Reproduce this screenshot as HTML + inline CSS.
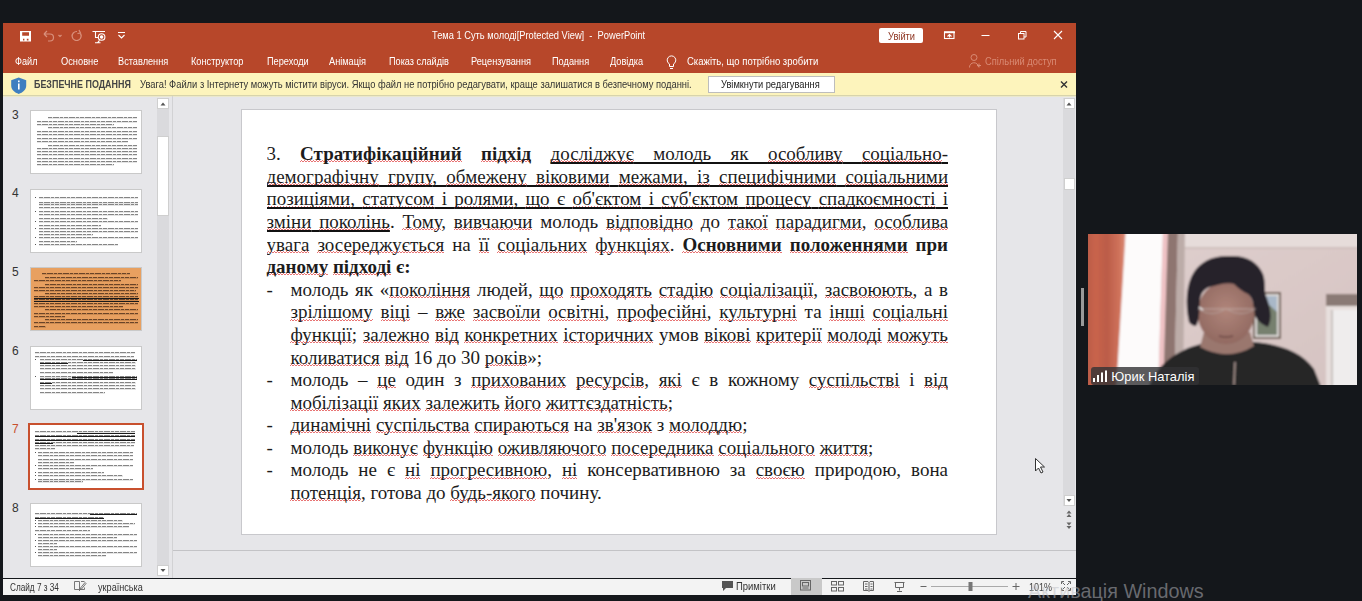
<!DOCTYPE html>
<html><head><meta charset="utf-8">
<style>
*{margin:0;padding:0;box-sizing:border-box}
html,body{width:1362px;height:601px;overflow:hidden;background:#14171b;font-family:"Liberation Sans",sans-serif;position:relative}
div{position:absolute}
.t{white-space:pre;transform-origin:0 0;line-height:1}
#title{left:3px;top:23px;width:1073px;height:50px;background:#b7472a}
#msg{left:3px;top:73px;width:1073px;height:24px;background:#fdf4bc;border-bottom:1px solid #ebe8cc}
#main{left:3px;top:97px;width:1073px;height:481px;background:#e6e6e9}
#status{left:3px;top:579px;width:1073px;height:16px;background:#f3f3f3}
.wt{color:#fff;font-size:10px}
.ln{white-space:nowrap;font-family:"Liberation Serif",serif;font-size:19px;color:#1c1c1c;line-height:22.58px;height:22.58px}
.j{text-align:justify;text-align-last:justify;white-space:normal;overflow:hidden}
.w{background-image:linear-gradient(90deg,transparent 0 1px,rgba(225,70,70,.75) 1px 2px,transparent 2px),linear-gradient(90deg,rgba(225,70,70,.75) 0 1px,transparent 1px 2px,rgba(225,70,70,.75) 2px);background-size:3px 1px,3px 1px;background-position:0 17.2px,0 18.2px;background-repeat:repeat-x}
u{text-decoration:underline #111;text-decoration-thickness:1.5px;text-underline-offset:1.5px;text-decoration-skip-ink:none}
.thumb{background:#fff;border:1px solid #c9c9c9;width:112px;height:64px;overflow:hidden}
.tl{left:8px;width:96px;height:1px;background:#777}
.num{font-size:12px;color:#333}
</style></head>
<body>
<!-- title bar -->
<div id="title"></div>
<!-- QAT icons -->
<svg style="position:absolute;left:0;top:0;z-index:5" width="1362" height="100">
  <!-- save -->
  <path fill="#fff" fill-rule="evenodd" d="M20 31h11v10.5h-11z M22.2 32.3h6.8v3.4h-6.8z M23 38.7h1.4v1.8h-1.4z M26.8 38.7h1.7v1.8h-1.7z"/>
  <!-- undo (disabled) -->
  <g fill="none" stroke="#d9907c" stroke-width="1.2">
    <path d="M44 34 l3-3 M44 34 l3 3 M44 34 h6 a3.5 3.5 0 0 1 0 7 h-2"/>
    <path d="M58.5 35 l1.5 1.5 l1.5-1.5"/>
    <path d="M80 33 a4.5 4.5 0 1 1 -3 -1.5 M79 30 l1.5 3 l-3 0.5"/>
  </g>
  <!-- present from start -->
  <g fill="none" stroke="#fff" stroke-width="1.1">
    <path d="M92.5 31.5h12.5 M95.5 31.5v6h2.5"/>
    <circle cx="101.6" cy="37" r="3.3"/>
    <circle cx="101.6" cy="37" r="1.2" fill="#fff"/>
    <path d="M95 42.8h5.5 M97.5 42.8l2-2.5"/>
  </g>
  <!-- dropdown -->
  <g fill="none" stroke="#fff" stroke-width="1.1">
    <path d="M118 32.5h7 M118.5 35l3 3l3-3"/>
  </g>
  <!-- ribbon display options -->
  <g fill="none" stroke="#fff" stroke-width="1.1">
    <rect x="944.5" y="32" width="9.5" height="6.5"/>
    <path d="M944 32.3h11" stroke-width="1.8"/>
    <path d="M947.5 36.5l2-2l2 2 M949.5 34.5v3" />
  </g>
  <!-- minimize -->
  <path d="M981.5 35.5h8" stroke="#fff" stroke-width="1"/>
  <!-- restore -->
  <g fill="none" stroke="#fff" stroke-width="1">
    <rect x="1018.5" y="33.5" width="5.5" height="5.5"/>
    <path d="M1020.5 33.5v-2h5.5v5.5h-2"/>
  </g>
  <!-- close -->
  <path d="M1054 31l8 8 M1062 31l-8 8" stroke="#fff" stroke-width="1.1"/>
  <!-- lightbulb -->
  <g fill="none" stroke="#fff" stroke-width="1">
    <path d="M669.5 66.5v-2.5 a4.3 4.3 0 1 1 4 0 v2.5z"/>
    <path d="M670 68.5h3"/>
  </g>
  <!-- person share -->
  <g fill="none" stroke="#d98a74" stroke-width="1">
    <circle cx="974" cy="57.5" r="3"/>
    <path d="M969.5 67.5a4.5 4.5 0 0 1 9-0.5 M977 65.5h4 M979 63.5v4"/>
  </g>
  <!-- shield -->
  <path d="M18.7 77.5 l7.5 2.8 v5.5 c0 4-3.5 6.8-7.5 8.2 c-4-1.4-7.5-4.2-7.5-8.2 v-5.5z" fill="#3f7fc0"/>
  <rect x="18" y="83.5" width="1.6" height="6" fill="#fff"/>
  <rect x="18" y="80.5" width="1.6" height="1.7" fill="#fff"/>
  <!-- msg close -->
  <path d="M1061 81.5l6 6 M1067 81.5l-6 6" stroke="#333" stroke-width="1.4"/>
</svg>
<div class="t wt" style="left:432px;top:31px;transform:scaleX(0.93)">Тема 1 Суть молоді[Protected View]  -  PowerPoint</div>
<div style="left:879px;top:28px;width:44px;height:15px;background:#fff;border-radius:2px"></div>
<div class="t" style="left:888px;top:31.5px;font-size:10px;color:#8e3522;transform:scaleX(0.93)">Увійти</div>

<div class="t wt" style="left:15px;top:57px;transform:scaleX(0.915)">Файл</div>
<div class="t wt" style="left:60.6px;top:57px;transform:scaleX(0.929)">Основне</div>
<div class="t wt" style="left:118px;top:57px;transform:scaleX(0.92)">Вставлення</div>
<div class="t wt" style="left:190.5px;top:57px;transform:scaleX(0.92)">Конструктор</div>
<div class="t wt" style="left:266.8px;top:57px;transform:scaleX(0.92)">Переходи</div>
<div class="t wt" style="left:329.2px;top:57px;transform:scaleX(0.92)">Анімація</div>
<div class="t wt" style="left:388.9px;top:57px;transform:scaleX(0.914)">Показ слайдів</div>
<div class="t wt" style="left:470.5px;top:57px;transform:scaleX(0.92)">Рецензування</div>
<div class="t wt" style="left:551.5px;top:57px;transform:scaleX(0.92)">Подання</div>
<div class="t wt" style="left:610.3px;top:57px;transform:scaleX(0.92)">Довідка</div>
<div class="t wt" style="left:686.9px;top:57px;transform:scaleX(0.951)">Скажіть, що потрібно зробити</div>
<div class="t wt" style="left:985.3px;top:57px;color:#d98a74;transform:scaleX(0.932)">Спільний доступ</div>

<!-- message bar -->
<div id="msg"></div>
<div class="t" style="left:34.4px;top:80px;font-size:10px;font-weight:bold;color:#444;transform:scaleX(0.893)">БЕЗПЕЧНЕ ПОДАННЯ</div>
<div class="t" style="left:139.5px;top:80px;font-size:10px;color:#333;transform:scaleX(0.935)">Увага! Файли з Інтернету можуть містити віруси. Якщо файл не потрібно редагувати, краще залишатися в безпечному поданні.</div>
<div style="left:708px;top:76px;width:127px;height:17px;background:#fff;border:1px solid #bdbdbd"></div>
<div class="t" style="left:721px;top:80px;font-size:10px;color:#222;transform:scaleX(0.93)">Увімкнути редагування</div>

<!-- main -->
<div id="main"></div>
<div style="left:3px;top:95px;width:1073px;height:1px;background:#d8d4ac"></div>
<!-- left panel scrollbar -->
<div style="left:157px;top:98px;width:12px;height:478px;background:#dadadd"></div>
<div style="left:157px;top:98px;width:12px;height:11px;background:#fff;border:1px solid #cfcfcf"></div>
<div style="left:157px;top:136px;width:12px;height:80px;background:#fff;border:1px solid #cfcfcf"></div>
<div style="left:157px;top:565px;width:12px;height:11px;background:#fff;border:1px solid #cfcfcf"></div>
<div style="left:172px;top:96px;width:1px;height:482px;background:#d2d2d4"></div>
<!-- right scrollbar -->
<div style="left:1063px;top:98px;width:12px;height:408px;background:#dadadd"></div>
<div style="left:1063.5px;top:98px;width:11px;height:11px;background:#fff;border:1px solid #cfcfcf"></div>
<div style="left:1063.5px;top:178px;width:11px;height:12px;background:#fff;border:1px solid #cfcfcf"></div>
<div style="left:1063.5px;top:495px;width:11px;height:11px;background:#fff;border:1px solid #cfcfcf"></div>
<!-- bottom notes separator -->
<div style="left:173px;top:550px;width:903px;height:1px;background:#c3c3c6"></div>

<svg style="position:absolute;left:0;top:0" width="1362" height="601">
  <path d="M160.5 105.5l2.5-3l2.5 3z" fill="#555"/>
  <path d="M160.5 569l2.5 3l2.5-3z" fill="#555"/>
  <path d="M1066.5 105.5l2.5-3l2.5 3z" fill="#555"/>
  <path d="M1066.5 499l2.5 3l2.5-3z" fill="#555"/>
  <path d="M1066.5 513.5l2.5-3l2.5 3z M1066.5 517l2.5-3l2.5 3z" fill="#666"/>
  <path d="M1066.5 522.5l2.5 3l2.5-3z M1066.5 526l2.5 3l2.5-3z" fill="#666"/>
</svg>

<!-- thumbnails -->
<div class="t num" style="left:12px;top:108.5px">3</div>
<div class="thumb" style="left:30px;top:110px"></div>
<div class="t num" style="left:12px;top:186.5px">4</div>
<div class="thumb" style="left:30px;top:189px"></div>
<div class="t num" style="left:12px;top:265.5px">5</div>
<div class="thumb" style="left:30px;top:267px;background:#e8a060"></div>
<div class="t num" style="left:12px;top:344.5px">6</div>
<div class="thumb" style="left:30px;top:346px"></div>
<div class="t num" style="left:12px;top:422.5px;color:#c8502e">7</div>
<div class="thumb" style="left:28px;top:423px;width:116px;height:67px;border:2px solid #c8502e"></div>
<div class="t num" style="left:12px;top:501.5px">8</div>
<div class="thumb" style="left:30px;top:503px"></div>
<div style="left:48px;top:117px;width:89px;height:1px;background:repeating-linear-gradient(90deg,#858585 0 4px,rgba(150,150,150,0.25) 4px 5px,#858585 5px 11px,rgba(150,150,150,0.25) 11px 12px,#858585 12px 15px,rgba(150,150,150,0.25) 15px 16px)"></div>
<div style="left:48px;top:118px;width:89px;height:1px;background:rgba(150,150,150,0.25)"></div>
<div style="left:37px;top:121px;width:100px;height:1px;background:repeating-linear-gradient(90deg,#858585 0 4px,rgba(150,150,150,0.25) 4px 5px,#858585 5px 11px,rgba(150,150,150,0.25) 11px 12px,#858585 12px 15px,rgba(150,150,150,0.25) 15px 16px)"></div>
<div style="left:37px;top:122px;width:100px;height:1px;background:rgba(150,150,150,0.25)"></div>
<div style="left:37px;top:124px;width:77px;height:1px;background:repeating-linear-gradient(90deg,#858585 0 4px,rgba(150,150,150,0.25) 4px 5px,#858585 5px 11px,rgba(150,150,150,0.25) 11px 12px,#858585 12px 15px,rgba(150,150,150,0.25) 15px 16px)"></div>
<div style="left:37px;top:125px;width:77px;height:1px;background:rgba(150,150,150,0.25)"></div>
<div style="left:48px;top:127px;width:89px;height:1px;background:repeating-linear-gradient(90deg,#858585 0 4px,rgba(150,150,150,0.25) 4px 5px,#858585 5px 11px,rgba(150,150,150,0.25) 11px 12px,#858585 12px 15px,rgba(150,150,150,0.25) 15px 16px)"></div>
<div style="left:48px;top:128px;width:89px;height:1px;background:rgba(150,150,150,0.25)"></div>
<div style="left:37px;top:131px;width:100px;height:1px;background:repeating-linear-gradient(90deg,#858585 0 4px,rgba(150,150,150,0.25) 4px 5px,#858585 5px 11px,rgba(150,150,150,0.25) 11px 12px,#858585 12px 15px,rgba(150,150,150,0.25) 15px 16px)"></div>
<div style="left:37px;top:132px;width:100px;height:1px;background:rgba(150,150,150,0.25)"></div>
<div style="left:37px;top:134px;width:100px;height:1px;background:repeating-linear-gradient(90deg,#858585 0 4px,rgba(150,150,150,0.25) 4px 5px,#858585 5px 11px,rgba(150,150,150,0.25) 11px 12px,#858585 12px 15px,rgba(150,150,150,0.25) 15px 16px)"></div>
<div style="left:37px;top:135px;width:100px;height:1px;background:rgba(150,150,150,0.25)"></div>
<div style="left:37px;top:138px;width:100px;height:1px;background:repeating-linear-gradient(90deg,#858585 0 4px,rgba(150,150,150,0.25) 4px 5px,#858585 5px 11px,rgba(150,150,150,0.25) 11px 12px,#858585 12px 15px,rgba(150,150,150,0.25) 15px 16px)"></div>
<div style="left:37px;top:139px;width:100px;height:1px;background:rgba(150,150,150,0.25)"></div>
<div style="left:37px;top:141px;width:91px;height:1px;background:repeating-linear-gradient(90deg,#858585 0 4px,rgba(150,150,150,0.25) 4px 5px,#858585 5px 11px,rgba(150,150,150,0.25) 11px 12px,#858585 12px 15px,rgba(150,150,150,0.25) 15px 16px)"></div>
<div style="left:37px;top:142px;width:91px;height:1px;background:rgba(150,150,150,0.25)"></div>
<div style="left:48px;top:145px;width:89px;height:1px;background:repeating-linear-gradient(90deg,#858585 0 4px,rgba(150,150,150,0.25) 4px 5px,#858585 5px 11px,rgba(150,150,150,0.25) 11px 12px,#858585 12px 15px,rgba(150,150,150,0.25) 15px 16px)"></div>
<div style="left:48px;top:146px;width:89px;height:1px;background:rgba(150,150,150,0.25)"></div>
<div style="left:37px;top:148px;width:100px;height:1px;background:repeating-linear-gradient(90deg,#858585 0 4px,rgba(150,150,150,0.25) 4px 5px,#858585 5px 11px,rgba(150,150,150,0.25) 11px 12px,#858585 12px 15px,rgba(150,150,150,0.25) 15px 16px)"></div>
<div style="left:37px;top:149px;width:100px;height:1px;background:rgba(150,150,150,0.25)"></div>
<div style="left:37px;top:151px;width:100px;height:1px;background:repeating-linear-gradient(90deg,#858585 0 4px,rgba(150,150,150,0.25) 4px 5px,#858585 5px 11px,rgba(150,150,150,0.25) 11px 12px,#858585 12px 15px,rgba(150,150,150,0.25) 15px 16px)"></div>
<div style="left:37px;top:152px;width:100px;height:1px;background:rgba(150,150,150,0.25)"></div>
<div style="left:37px;top:154px;width:100px;height:1px;background:repeating-linear-gradient(90deg,#858585 0 4px,rgba(150,150,150,0.25) 4px 5px,#858585 5px 11px,rgba(150,150,150,0.25) 11px 12px,#858585 12px 15px,rgba(150,150,150,0.25) 15px 16px)"></div>
<div style="left:37px;top:155px;width:100px;height:1px;background:rgba(150,150,150,0.25)"></div>
<div style="left:37px;top:158px;width:100px;height:1px;background:repeating-linear-gradient(90deg,#858585 0 4px,rgba(150,150,150,0.25) 4px 5px,#858585 5px 11px,rgba(150,150,150,0.25) 11px 12px,#858585 12px 15px,rgba(150,150,150,0.25) 15px 16px)"></div>
<div style="left:37px;top:159px;width:100px;height:1px;background:rgba(150,150,150,0.25)"></div>
<div style="left:37px;top:161px;width:100px;height:1px;background:repeating-linear-gradient(90deg,#858585 0 4px,rgba(150,150,150,0.25) 4px 5px,#858585 5px 11px,rgba(150,150,150,0.25) 11px 12px,#858585 12px 15px,rgba(150,150,150,0.25) 15px 16px)"></div>
<div style="left:37px;top:162px;width:100px;height:1px;background:rgba(150,150,150,0.25)"></div>
<div style="left:37px;top:164px;width:77px;height:1px;background:repeating-linear-gradient(90deg,#858585 0 4px,rgba(150,150,150,0.25) 4px 5px,#858585 5px 11px,rgba(150,150,150,0.25) 11px 12px,#858585 12px 15px,rgba(150,150,150,0.25) 15px 16px)"></div>
<div style="left:37px;top:165px;width:77px;height:1px;background:rgba(150,150,150,0.25)"></div>
<div style="left:39px;top:197px;width:99px;height:1px;background:repeating-linear-gradient(90deg,#858585 0 4px,rgba(150,150,150,0.25) 4px 5px,#858585 5px 11px,rgba(150,150,150,0.25) 11px 12px,#858585 12px 15px,rgba(150,150,150,0.25) 15px 16px)"></div>
<div style="left:39px;top:198px;width:99px;height:1px;background:rgba(150,150,150,0.25)"></div>
<div style="left:39px;top:202px;width:99px;height:1px;background:repeating-linear-gradient(90deg,#858585 0 4px,rgba(150,150,150,0.25) 4px 5px,#858585 5px 11px,rgba(150,150,150,0.25) 11px 12px,#858585 12px 15px,rgba(150,150,150,0.25) 15px 16px)"></div>
<div style="left:39px;top:203px;width:99px;height:1px;background:rgba(150,150,150,0.25)"></div>
<div style="left:39px;top:204px;width:99px;height:1px;background:repeating-linear-gradient(90deg,#858585 0 4px,rgba(150,150,150,0.25) 4px 5px,#858585 5px 11px,rgba(150,150,150,0.25) 11px 12px,#858585 12px 15px,rgba(150,150,150,0.25) 15px 16px)"></div>
<div style="left:39px;top:205px;width:99px;height:1px;background:rgba(150,150,150,0.25)"></div>
<div style="left:39px;top:207px;width:59px;height:1px;background:repeating-linear-gradient(90deg,#858585 0 4px,rgba(150,150,150,0.25) 4px 5px,#858585 5px 11px,rgba(150,150,150,0.25) 11px 12px,#858585 12px 15px,rgba(150,150,150,0.25) 15px 16px)"></div>
<div style="left:39px;top:208px;width:59px;height:1px;background:rgba(150,150,150,0.25)"></div>
<div style="left:39px;top:211px;width:99px;height:1px;background:repeating-linear-gradient(90deg,#858585 0 4px,rgba(150,150,150,0.25) 4px 5px,#858585 5px 11px,rgba(150,150,150,0.25) 11px 12px,#858585 12px 15px,rgba(150,150,150,0.25) 15px 16px)"></div>
<div style="left:39px;top:212px;width:99px;height:1px;background:rgba(150,150,150,0.25)"></div>
<div style="left:39px;top:214px;width:99px;height:1px;background:repeating-linear-gradient(90deg,#858585 0 4px,rgba(150,150,150,0.25) 4px 5px,#858585 5px 11px,rgba(150,150,150,0.25) 11px 12px,#858585 12px 15px,rgba(150,150,150,0.25) 15px 16px)"></div>
<div style="left:39px;top:215px;width:99px;height:1px;background:rgba(150,150,150,0.25)"></div>
<div style="left:39px;top:218px;width:69px;height:1px;background:repeating-linear-gradient(90deg,#858585 0 4px,rgba(150,150,150,0.25) 4px 5px,#858585 5px 11px,rgba(150,150,150,0.25) 11px 12px,#858585 12px 15px,rgba(150,150,150,0.25) 15px 16px)"></div>
<div style="left:39px;top:219px;width:69px;height:1px;background:rgba(150,150,150,0.25)"></div>
<div style="left:39px;top:221px;width:99px;height:1px;background:repeating-linear-gradient(90deg,#858585 0 4px,rgba(150,150,150,0.25) 4px 5px,#858585 5px 11px,rgba(150,150,150,0.25) 11px 12px,#858585 12px 15px,rgba(150,150,150,0.25) 15px 16px)"></div>
<div style="left:39px;top:222px;width:99px;height:1px;background:rgba(150,150,150,0.25)"></div>
<div style="left:39px;top:225px;width:62px;height:1px;background:repeating-linear-gradient(90deg,#858585 0 4px,rgba(150,150,150,0.25) 4px 5px,#858585 5px 11px,rgba(150,150,150,0.25) 11px 12px,#858585 12px 15px,rgba(150,150,150,0.25) 15px 16px)"></div>
<div style="left:39px;top:226px;width:62px;height:1px;background:rgba(150,150,150,0.25)"></div>
<div style="left:39px;top:228px;width:99px;height:1px;background:repeating-linear-gradient(90deg,#858585 0 4px,rgba(150,150,150,0.25) 4px 5px,#858585 5px 11px,rgba(150,150,150,0.25) 11px 12px,#858585 12px 15px,rgba(150,150,150,0.25) 15px 16px)"></div>
<div style="left:39px;top:229px;width:99px;height:1px;background:rgba(150,150,150,0.25)"></div>
<div style="left:39px;top:231px;width:99px;height:1px;background:repeating-linear-gradient(90deg,#858585 0 4px,rgba(150,150,150,0.25) 4px 5px,#858585 5px 11px,rgba(150,150,150,0.25) 11px 12px,#858585 12px 15px,rgba(150,150,150,0.25) 15px 16px)"></div>
<div style="left:39px;top:232px;width:99px;height:1px;background:rgba(150,150,150,0.25)"></div>
<div style="left:39px;top:234px;width:54px;height:1px;background:repeating-linear-gradient(90deg,#858585 0 4px,rgba(150,150,150,0.25) 4px 5px,#858585 5px 11px,rgba(150,150,150,0.25) 11px 12px,#858585 12px 15px,rgba(150,150,150,0.25) 15px 16px)"></div>
<div style="left:39px;top:235px;width:54px;height:1px;background:rgba(150,150,150,0.25)"></div>
<div style="left:39px;top:237px;width:99px;height:1px;background:repeating-linear-gradient(90deg,#858585 0 4px,rgba(150,150,150,0.25) 4px 5px,#858585 5px 11px,rgba(150,150,150,0.25) 11px 12px,#858585 12px 15px,rgba(150,150,150,0.25) 15px 16px)"></div>
<div style="left:39px;top:238px;width:99px;height:1px;background:rgba(150,150,150,0.25)"></div>
<div style="left:39px;top:241px;width:38px;height:1px;background:repeating-linear-gradient(90deg,#858585 0 4px,rgba(150,150,150,0.25) 4px 5px,#858585 5px 11px,rgba(150,150,150,0.25) 11px 12px,#858585 12px 15px,rgba(150,150,150,0.25) 15px 16px)"></div>
<div style="left:39px;top:242px;width:38px;height:1px;background:rgba(150,150,150,0.25)"></div>
<div style="left:39px;top:244px;width:79px;height:1px;background:repeating-linear-gradient(90deg,#858585 0 4px,rgba(150,150,150,0.25) 4px 5px,#858585 5px 11px,rgba(150,150,150,0.25) 11px 12px,#858585 12px 15px,rgba(150,150,150,0.25) 15px 16px)"></div>
<div style="left:39px;top:245px;width:79px;height:1px;background:rgba(150,150,150,0.25)"></div>
<div style="left:35px;top:197px;width:1px;height:1px;background:#555"></div>
<div style="left:35px;top:211px;width:1px;height:1px;background:#555"></div>
<div style="left:35px;top:221px;width:1px;height:1px;background:#555"></div>
<div style="left:35px;top:228px;width:1px;height:1px;background:#555"></div>
<div style="left:35px;top:237px;width:1px;height:1px;background:#555"></div>
<div style="left:35px;top:244px;width:1px;height:1px;background:#555"></div>
<div style="left:42px;top:273px;width:88px;height:1px;background:repeating-linear-gradient(90deg,#6a4428 0 4px,rgba(120,70,30,0.25) 4px 5px,#6a4428 5px 11px,rgba(120,70,30,0.25) 11px 12px,#6a4428 12px 15px,rgba(120,70,30,0.25) 15px 16px)"></div>
<div style="left:42px;top:274px;width:88px;height:1px;background:rgba(120,70,30,0.25)"></div>
<div style="left:45px;top:277px;width:93px;height:1px;background:repeating-linear-gradient(90deg,#6a4428 0 4px,rgba(120,70,30,0.25) 4px 5px,#6a4428 5px 11px,rgba(120,70,30,0.25) 11px 12px,#6a4428 12px 15px,rgba(120,70,30,0.25) 15px 16px)"></div>
<div style="left:45px;top:278px;width:93px;height:1px;background:rgba(120,70,30,0.25)"></div>
<div style="left:34px;top:280px;width:87px;height:1px;background:repeating-linear-gradient(90deg,#6a4428 0 4px,rgba(120,70,30,0.25) 4px 5px,#6a4428 5px 11px,rgba(120,70,30,0.25) 11px 12px,#6a4428 12px 15px,rgba(120,70,30,0.25) 15px 16px)"></div>
<div style="left:34px;top:281px;width:87px;height:1px;background:rgba(120,70,30,0.25)"></div>
<div style="left:45px;top:284px;width:93px;height:1px;background:repeating-linear-gradient(90deg,#6a4428 0 4px,rgba(120,70,30,0.25) 4px 5px,#6a4428 5px 11px,rgba(120,70,30,0.25) 11px 12px,#6a4428 12px 15px,rgba(120,70,30,0.25) 15px 16px)"></div>
<div style="left:45px;top:285px;width:93px;height:1px;background:rgba(120,70,30,0.25)"></div>
<div style="left:34px;top:287px;width:104px;height:1px;background:repeating-linear-gradient(90deg,#6a4428 0 4px,rgba(120,70,30,0.25) 4px 5px,#6a4428 5px 11px,rgba(120,70,30,0.25) 11px 12px,#6a4428 12px 15px,rgba(120,70,30,0.25) 15px 16px)"></div>
<div style="left:34px;top:288px;width:104px;height:1px;background:rgba(120,70,30,0.25)"></div>
<div style="left:34px;top:290px;width:102px;height:1px;background:repeating-linear-gradient(90deg,#6a4428 0 4px,rgba(120,70,30,0.25) 4px 5px,#6a4428 5px 11px,rgba(120,70,30,0.25) 11px 12px,#6a4428 12px 15px,rgba(120,70,30,0.25) 15px 16px)"></div>
<div style="left:34px;top:291px;width:102px;height:1px;background:rgba(120,70,30,0.25)"></div>
<div style="left:45px;top:293px;width:93px;height:1px;background:repeating-linear-gradient(90deg,#6a4428 0 4px,rgba(120,70,30,0.25) 4px 5px,#6a4428 5px 11px,rgba(120,70,30,0.25) 11px 12px,#6a4428 12px 15px,rgba(120,70,30,0.25) 15px 16px)"></div>
<div style="left:45px;top:294px;width:93px;height:1px;background:rgba(120,70,30,0.25)"></div>
<div style="left:34px;top:296px;width:104px;height:1px;background:repeating-linear-gradient(90deg,#6a4428 0 4px,rgba(120,70,30,0.25) 4px 5px,#6a4428 5px 11px,rgba(120,70,30,0.25) 11px 12px,#6a4428 12px 15px,rgba(120,70,30,0.25) 15px 16px)"></div>
<div style="left:34px;top:297px;width:104px;height:1px;background:rgba(120,70,30,0.25)"></div>
<div style="left:34px;top:299px;width:104px;height:1px;background:repeating-linear-gradient(90deg,#6a4428 0 4px,rgba(120,70,30,0.25) 4px 5px,#6a4428 5px 11px,rgba(120,70,30,0.25) 11px 12px,#6a4428 12px 15px,rgba(120,70,30,0.25) 15px 16px)"></div>
<div style="left:34px;top:300px;width:104px;height:1px;background:rgba(120,70,30,0.25)"></div>
<div style="left:34px;top:303px;width:104px;height:1px;background:repeating-linear-gradient(90deg,#6a4428 0 4px,rgba(120,70,30,0.25) 4px 5px,#6a4428 5px 11px,rgba(120,70,30,0.25) 11px 12px,#6a4428 12px 15px,rgba(120,70,30,0.25) 15px 16px)"></div>
<div style="left:34px;top:304px;width:104px;height:1px;background:rgba(120,70,30,0.25)"></div>
<div style="left:34px;top:306px;width:89px;height:1px;background:repeating-linear-gradient(90deg,#6a4428 0 4px,rgba(120,70,30,0.25) 4px 5px,#6a4428 5px 11px,rgba(120,70,30,0.25) 11px 12px,#6a4428 12px 15px,rgba(120,70,30,0.25) 15px 16px)"></div>
<div style="left:34px;top:307px;width:89px;height:1px;background:rgba(120,70,30,0.25)"></div>
<div style="left:45px;top:309px;width:93px;height:1px;background:repeating-linear-gradient(90deg,#6a4428 0 4px,rgba(120,70,30,0.25) 4px 5px,#6a4428 5px 11px,rgba(120,70,30,0.25) 11px 12px,#6a4428 12px 15px,rgba(120,70,30,0.25) 15px 16px)"></div>
<div style="left:45px;top:310px;width:93px;height:1px;background:rgba(120,70,30,0.25)"></div>
<div style="left:34px;top:313px;width:104px;height:1px;background:repeating-linear-gradient(90deg,#6a4428 0 4px,rgba(120,70,30,0.25) 4px 5px,#6a4428 5px 11px,rgba(120,70,30,0.25) 11px 12px,#6a4428 12px 15px,rgba(120,70,30,0.25) 15px 16px)"></div>
<div style="left:34px;top:314px;width:104px;height:1px;background:rgba(120,70,30,0.25)"></div>
<div style="left:34px;top:316px;width:31px;height:1px;background:repeating-linear-gradient(90deg,#6a4428 0 4px,rgba(120,70,30,0.25) 4px 5px,#6a4428 5px 11px,rgba(120,70,30,0.25) 11px 12px,#6a4428 12px 15px,rgba(120,70,30,0.25) 15px 16px)"></div>
<div style="left:34px;top:317px;width:31px;height:1px;background:rgba(120,70,30,0.25)"></div>
<div style="left:45px;top:319px;width:93px;height:1px;background:repeating-linear-gradient(90deg,#6a4428 0 4px,rgba(120,70,30,0.25) 4px 5px,#6a4428 5px 11px,rgba(120,70,30,0.25) 11px 12px,#6a4428 12px 15px,rgba(120,70,30,0.25) 15px 16px)"></div>
<div style="left:45px;top:320px;width:93px;height:1px;background:rgba(120,70,30,0.25)"></div>
<div style="left:34px;top:322px;width:104px;height:1px;background:repeating-linear-gradient(90deg,#6a4428 0 4px,rgba(120,70,30,0.25) 4px 5px,#6a4428 5px 11px,rgba(120,70,30,0.25) 11px 12px,#6a4428 12px 15px,rgba(120,70,30,0.25) 15px 16px)"></div>
<div style="left:34px;top:323px;width:104px;height:1px;background:rgba(120,70,30,0.25)"></div>
<div style="left:34px;top:326px;width:12px;height:1px;background:repeating-linear-gradient(90deg,#6a4428 0 4px,rgba(120,70,30,0.25) 4px 5px,#6a4428 5px 11px,rgba(120,70,30,0.25) 11px 12px,#6a4428 12px 15px,rgba(120,70,30,0.25) 15px 16px)"></div>
<div style="left:34px;top:327px;width:12px;height:1px;background:rgba(120,70,30,0.25)"></div>
<div style="left:34px;top:298px;width:105px;height:1px;background:#1a1a1a"></div>
<div style="left:34px;top:301px;width:105px;height:1px;background:#1a1a1a"></div>
<div style="left:35px;top:352px;width:100px;height:1px;background:repeating-linear-gradient(90deg,#858585 0 4px,rgba(150,150,150,0.25) 4px 5px,#858585 5px 11px,rgba(150,150,150,0.25) 11px 12px,#858585 12px 15px,rgba(150,150,150,0.25) 15px 16px)"></div>
<div style="left:35px;top:353px;width:100px;height:1px;background:rgba(150,150,150,0.25)"></div>
<div style="left:35px;top:356px;width:99px;height:1px;background:repeating-linear-gradient(90deg,#858585 0 4px,rgba(150,150,150,0.25) 4px 5px,#858585 5px 11px,rgba(150,150,150,0.25) 11px 12px,#858585 12px 15px,rgba(150,150,150,0.25) 15px 16px)"></div>
<div style="left:35px;top:357px;width:99px;height:1px;background:rgba(150,150,150,0.25)"></div>
<div style="left:40px;top:359px;width:97px;height:1px;background:repeating-linear-gradient(90deg,#858585 0 4px,rgba(150,150,150,0.25) 4px 5px,#858585 5px 11px,rgba(150,150,150,0.25) 11px 12px,#858585 12px 15px,rgba(150,150,150,0.25) 15px 16px)"></div>
<div style="left:40px;top:360px;width:97px;height:1px;background:rgba(150,150,150,0.25)"></div>
<div style="left:40px;top:362px;width:96px;height:1px;background:repeating-linear-gradient(90deg,#858585 0 4px,rgba(150,150,150,0.25) 4px 5px,#858585 5px 11px,rgba(150,150,150,0.25) 11px 12px,#858585 12px 15px,rgba(150,150,150,0.25) 15px 16px)"></div>
<div style="left:40px;top:363px;width:96px;height:1px;background:rgba(150,150,150,0.25)"></div>
<div style="left:40px;top:365px;width:96px;height:1px;background:repeating-linear-gradient(90deg,#858585 0 4px,rgba(150,150,150,0.25) 4px 5px,#858585 5px 11px,rgba(150,150,150,0.25) 11px 12px,#858585 12px 15px,rgba(150,150,150,0.25) 15px 16px)"></div>
<div style="left:40px;top:366px;width:96px;height:1px;background:rgba(150,150,150,0.25)"></div>
<div style="left:40px;top:368px;width:96px;height:1px;background:repeating-linear-gradient(90deg,#858585 0 4px,rgba(150,150,150,0.25) 4px 5px,#858585 5px 11px,rgba(150,150,150,0.25) 11px 12px,#858585 12px 15px,rgba(150,150,150,0.25) 15px 16px)"></div>
<div style="left:40px;top:369px;width:96px;height:1px;background:rgba(150,150,150,0.25)"></div>
<div style="left:40px;top:372px;width:73px;height:1px;background:repeating-linear-gradient(90deg,#858585 0 4px,rgba(150,150,150,0.25) 4px 5px,#858585 5px 11px,rgba(150,150,150,0.25) 11px 12px,#858585 12px 15px,rgba(150,150,150,0.25) 15px 16px)"></div>
<div style="left:40px;top:373px;width:73px;height:1px;background:rgba(150,150,150,0.25)"></div>
<div style="left:40px;top:376px;width:97px;height:1px;background:repeating-linear-gradient(90deg,#858585 0 4px,rgba(150,150,150,0.25) 4px 5px,#858585 5px 11px,rgba(150,150,150,0.25) 11px 12px,#858585 12px 15px,rgba(150,150,150,0.25) 15px 16px)"></div>
<div style="left:40px;top:377px;width:97px;height:1px;background:rgba(150,150,150,0.25)"></div>
<div style="left:40px;top:378px;width:97px;height:1px;background:repeating-linear-gradient(90deg,#858585 0 4px,rgba(150,150,150,0.25) 4px 5px,#858585 5px 11px,rgba(150,150,150,0.25) 11px 12px,#858585 12px 15px,rgba(150,150,150,0.25) 15px 16px)"></div>
<div style="left:40px;top:379px;width:97px;height:1px;background:rgba(150,150,150,0.25)"></div>
<div style="left:40px;top:382px;width:96px;height:1px;background:repeating-linear-gradient(90deg,#858585 0 4px,rgba(150,150,150,0.25) 4px 5px,#858585 5px 11px,rgba(150,150,150,0.25) 11px 12px,#858585 12px 15px,rgba(150,150,150,0.25) 15px 16px)"></div>
<div style="left:40px;top:383px;width:96px;height:1px;background:rgba(150,150,150,0.25)"></div>
<div style="left:40px;top:385px;width:96px;height:1px;background:repeating-linear-gradient(90deg,#858585 0 4px,rgba(150,150,150,0.25) 4px 5px,#858585 5px 11px,rgba(150,150,150,0.25) 11px 12px,#858585 12px 15px,rgba(150,150,150,0.25) 15px 16px)"></div>
<div style="left:40px;top:386px;width:96px;height:1px;background:rgba(150,150,150,0.25)"></div>
<div style="left:40px;top:388px;width:96px;height:1px;background:repeating-linear-gradient(90deg,#858585 0 4px,rgba(150,150,150,0.25) 4px 5px,#858585 5px 11px,rgba(150,150,150,0.25) 11px 12px,#858585 12px 15px,rgba(150,150,150,0.25) 15px 16px)"></div>
<div style="left:40px;top:389px;width:96px;height:1px;background:rgba(150,150,150,0.25)"></div>
<div style="left:40px;top:392px;width:65px;height:1px;background:repeating-linear-gradient(90deg,#858585 0 4px,rgba(150,150,150,0.25) 4px 5px,#858585 5px 11px,rgba(150,150,150,0.25) 11px 12px,#858585 12px 15px,rgba(150,150,150,0.25) 15px 16px)"></div>
<div style="left:40px;top:393px;width:65px;height:1px;background:rgba(150,150,150,0.25)"></div>
<div style="left:35px;top:359px;width:1px;height:1px;background:#555"></div>
<div style="left:35px;top:376px;width:1px;height:1px;background:#555"></div>
<div style="left:83px;top:360px;width:54px;height:1px;background:#1a1a1a"></div>
<div style="left:40px;top:363px;width:28px;height:1px;background:#1a1a1a"></div>
<div style="left:72px;top:377px;width:65px;height:1px;background:#1a1a1a"></div>
<div style="left:40px;top:379px;width:97px;height:1px;background:#1a1a1a"></div>
<div style="left:40px;top:383px;width:12px;height:1px;background:#1a1a1a"></div>
<div style="left:35px;top:431px;width:100px;height:1px;background:repeating-linear-gradient(90deg,#858585 0 4px,rgba(150,150,150,0.25) 4px 5px,#858585 5px 11px,rgba(150,150,150,0.25) 11px 12px,#858585 12px 15px,rgba(150,150,150,0.25) 15px 16px)"></div>
<div style="left:35px;top:432px;width:100px;height:1px;background:rgba(150,150,150,0.25)"></div>
<div style="left:35px;top:435px;width:100px;height:1px;background:repeating-linear-gradient(90deg,#858585 0 4px,rgba(150,150,150,0.25) 4px 5px,#858585 5px 11px,rgba(150,150,150,0.25) 11px 12px,#858585 12px 15px,rgba(150,150,150,0.25) 15px 16px)"></div>
<div style="left:35px;top:436px;width:100px;height:1px;background:rgba(150,150,150,0.25)"></div>
<div style="left:35px;top:439px;width:100px;height:1px;background:repeating-linear-gradient(90deg,#858585 0 4px,rgba(150,150,150,0.25) 4px 5px,#858585 5px 11px,rgba(150,150,150,0.25) 11px 12px,#858585 12px 15px,rgba(150,150,150,0.25) 15px 16px)"></div>
<div style="left:35px;top:440px;width:100px;height:1px;background:rgba(150,150,150,0.25)"></div>
<div style="left:35px;top:442px;width:100px;height:1px;background:repeating-linear-gradient(90deg,#858585 0 4px,rgba(150,150,150,0.25) 4px 5px,#858585 5px 11px,rgba(150,150,150,0.25) 11px 12px,#858585 12px 15px,rgba(150,150,150,0.25) 15px 16px)"></div>
<div style="left:35px;top:443px;width:100px;height:1px;background:rgba(150,150,150,0.25)"></div>
<div style="left:35px;top:445px;width:99px;height:1px;background:repeating-linear-gradient(90deg,#858585 0 4px,rgba(150,150,150,0.25) 4px 5px,#858585 5px 11px,rgba(150,150,150,0.25) 11px 12px,#858585 12px 15px,rgba(150,150,150,0.25) 15px 16px)"></div>
<div style="left:35px;top:446px;width:99px;height:1px;background:rgba(150,150,150,0.25)"></div>
<div style="left:35px;top:448px;width:20px;height:1px;background:repeating-linear-gradient(90deg,#858585 0 4px,rgba(150,150,150,0.25) 4px 5px,#858585 5px 11px,rgba(150,150,150,0.25) 11px 12px,#858585 12px 15px,rgba(150,150,150,0.25) 15px 16px)"></div>
<div style="left:35px;top:449px;width:20px;height:1px;background:rgba(150,150,150,0.25)"></div>
<div style="left:38px;top:452px;width:95px;height:1px;background:repeating-linear-gradient(90deg,#858585 0 4px,rgba(150,150,150,0.25) 4px 5px,#858585 5px 11px,rgba(150,150,150,0.25) 11px 12px,#858585 12px 15px,rgba(150,150,150,0.25) 15px 16px)"></div>
<div style="left:38px;top:453px;width:95px;height:1px;background:rgba(150,150,150,0.25)"></div>
<div style="left:38px;top:455px;width:95px;height:1px;background:repeating-linear-gradient(90deg,#858585 0 4px,rgba(150,150,150,0.25) 4px 5px,#858585 5px 11px,rgba(150,150,150,0.25) 11px 12px,#858585 12px 15px,rgba(150,150,150,0.25) 15px 16px)"></div>
<div style="left:38px;top:456px;width:95px;height:1px;background:rgba(150,150,150,0.25)"></div>
<div style="left:38px;top:459px;width:95px;height:1px;background:repeating-linear-gradient(90deg,#858585 0 4px,rgba(150,150,150,0.25) 4px 5px,#858585 5px 11px,rgba(150,150,150,0.25) 11px 12px,#858585 12px 15px,rgba(150,150,150,0.25) 15px 16px)"></div>
<div style="left:38px;top:460px;width:95px;height:1px;background:rgba(150,150,150,0.25)"></div>
<div style="left:38px;top:462px;width:36px;height:1px;background:repeating-linear-gradient(90deg,#858585 0 4px,rgba(150,150,150,0.25) 4px 5px,#858585 5px 11px,rgba(150,150,150,0.25) 11px 12px,#858585 12px 15px,rgba(150,150,150,0.25) 15px 16px)"></div>
<div style="left:38px;top:463px;width:36px;height:1px;background:rgba(150,150,150,0.25)"></div>
<div style="left:38px;top:465px;width:95px;height:1px;background:repeating-linear-gradient(90deg,#858585 0 4px,rgba(150,150,150,0.25) 4px 5px,#858585 5px 11px,rgba(150,150,150,0.25) 11px 12px,#858585 12px 15px,rgba(150,150,150,0.25) 15px 16px)"></div>
<div style="left:38px;top:466px;width:95px;height:1px;background:rgba(150,150,150,0.25)"></div>
<div style="left:38px;top:468px;width:55px;height:1px;background:repeating-linear-gradient(90deg,#858585 0 4px,rgba(150,150,150,0.25) 4px 5px,#858585 5px 11px,rgba(150,150,150,0.25) 11px 12px,#858585 12px 15px,rgba(150,150,150,0.25) 15px 16px)"></div>
<div style="left:38px;top:469px;width:55px;height:1px;background:rgba(150,150,150,0.25)"></div>
<div style="left:38px;top:472px;width:66px;height:1px;background:repeating-linear-gradient(90deg,#858585 0 4px,rgba(150,150,150,0.25) 4px 5px,#858585 5px 11px,rgba(150,150,150,0.25) 11px 12px,#858585 12px 15px,rgba(150,150,150,0.25) 15px 16px)"></div>
<div style="left:38px;top:473px;width:66px;height:1px;background:rgba(150,150,150,0.25)"></div>
<div style="left:38px;top:475px;width:85px;height:1px;background:repeating-linear-gradient(90deg,#858585 0 4px,rgba(150,150,150,0.25) 4px 5px,#858585 5px 11px,rgba(150,150,150,0.25) 11px 12px,#858585 12px 15px,rgba(150,150,150,0.25) 15px 16px)"></div>
<div style="left:38px;top:476px;width:85px;height:1px;background:rgba(150,150,150,0.25)"></div>
<div style="left:38px;top:479px;width:95px;height:1px;background:repeating-linear-gradient(90deg,#858585 0 4px,rgba(150,150,150,0.25) 4px 5px,#858585 5px 11px,rgba(150,150,150,0.25) 11px 12px,#858585 12px 15px,rgba(150,150,150,0.25) 15px 16px)"></div>
<div style="left:38px;top:480px;width:95px;height:1px;background:rgba(150,150,150,0.25)"></div>
<div style="left:38px;top:481px;width:45px;height:1px;background:repeating-linear-gradient(90deg,#858585 0 4px,rgba(150,150,150,0.25) 4px 5px,#858585 5px 11px,rgba(150,150,150,0.25) 11px 12px,#858585 12px 15px,rgba(150,150,150,0.25) 15px 16px)"></div>
<div style="left:38px;top:482px;width:45px;height:1px;background:rgba(150,150,150,0.25)"></div>
<div style="left:35px;top:452px;width:1px;height:1px;background:#555"></div>
<div style="left:35px;top:465px;width:1px;height:1px;background:#555"></div>
<div style="left:35px;top:472px;width:1px;height:1px;background:#555"></div>
<div style="left:35px;top:475px;width:1px;height:1px;background:#555"></div>
<div style="left:35px;top:479px;width:1px;height:1px;background:#555"></div>
<div style="left:77px;top:433px;width:58px;height:1px;background:#1a1a1a"></div>
<div style="left:35px;top:436px;width:100px;height:1px;background:#1a1a1a"></div>
<div style="left:35px;top:440px;width:100px;height:1px;background:#1a1a1a"></div>
<div style="left:35px;top:443px;width:18px;height:1px;background:#1a1a1a"></div>
<div style="left:35px;top:513px;width:102px;height:1px;background:repeating-linear-gradient(90deg,#858585 0 4px,rgba(150,150,150,0.25) 4px 5px,#858585 5px 11px,rgba(150,150,150,0.25) 11px 12px,#858585 12px 15px,rgba(150,150,150,0.25) 15px 16px)"></div>
<div style="left:35px;top:514px;width:102px;height:1px;background:rgba(150,150,150,0.25)"></div>
<div style="left:35px;top:517px;width:69px;height:1px;background:repeating-linear-gradient(90deg,#858585 0 4px,rgba(150,150,150,0.25) 4px 5px,#858585 5px 11px,rgba(150,150,150,0.25) 11px 12px,#858585 12px 15px,rgba(150,150,150,0.25) 15px 16px)"></div>
<div style="left:35px;top:518px;width:69px;height:1px;background:rgba(150,150,150,0.25)"></div>
<div style="left:38px;top:520px;width:85px;height:1px;background:repeating-linear-gradient(90deg,#858585 0 4px,rgba(150,150,150,0.25) 4px 5px,#858585 5px 11px,rgba(150,150,150,0.25) 11px 12px,#858585 12px 15px,rgba(150,150,150,0.25) 15px 16px)"></div>
<div style="left:38px;top:521px;width:85px;height:1px;background:rgba(150,150,150,0.25)"></div>
<div style="left:38px;top:523px;width:97px;height:1px;background:repeating-linear-gradient(90deg,#858585 0 4px,rgba(150,150,150,0.25) 4px 5px,#858585 5px 11px,rgba(150,150,150,0.25) 11px 12px,#858585 12px 15px,rgba(150,150,150,0.25) 15px 16px)"></div>
<div style="left:38px;top:524px;width:97px;height:1px;background:rgba(150,150,150,0.25)"></div>
<div style="left:38px;top:526px;width:91px;height:1px;background:repeating-linear-gradient(90deg,#858585 0 4px,rgba(150,150,150,0.25) 4px 5px,#858585 5px 11px,rgba(150,150,150,0.25) 11px 12px,#858585 12px 15px,rgba(150,150,150,0.25) 15px 16px)"></div>
<div style="left:38px;top:527px;width:91px;height:1px;background:rgba(150,150,150,0.25)"></div>
<div style="left:35px;top:530px;width:55px;height:1px;background:repeating-linear-gradient(90deg,#858585 0 4px,rgba(150,150,150,0.25) 4px 5px,#858585 5px 11px,rgba(150,150,150,0.25) 11px 12px,#858585 12px 15px,rgba(150,150,150,0.25) 15px 16px)"></div>
<div style="left:35px;top:531px;width:55px;height:1px;background:rgba(150,150,150,0.25)"></div>
<div style="left:38px;top:534px;width:99px;height:1px;background:repeating-linear-gradient(90deg,#858585 0 4px,rgba(150,150,150,0.25) 4px 5px,#858585 5px 11px,rgba(150,150,150,0.25) 11px 12px,#858585 12px 15px,rgba(150,150,150,0.25) 15px 16px)"></div>
<div style="left:38px;top:535px;width:99px;height:1px;background:rgba(150,150,150,0.25)"></div>
<div style="left:38px;top:537px;width:79px;height:1px;background:repeating-linear-gradient(90deg,#858585 0 4px,rgba(150,150,150,0.25) 4px 5px,#858585 5px 11px,rgba(150,150,150,0.25) 11px 12px,#858585 12px 15px,rgba(150,150,150,0.25) 15px 16px)"></div>
<div style="left:38px;top:538px;width:79px;height:1px;background:rgba(150,150,150,0.25)"></div>
<div style="left:38px;top:540px;width:99px;height:1px;background:repeating-linear-gradient(90deg,#858585 0 4px,rgba(150,150,150,0.25) 4px 5px,#858585 5px 11px,rgba(150,150,150,0.25) 11px 12px,#858585 12px 15px,rgba(150,150,150,0.25) 15px 16px)"></div>
<div style="left:38px;top:541px;width:99px;height:1px;background:rgba(150,150,150,0.25)"></div>
<div style="left:38px;top:543px;width:19px;height:1px;background:repeating-linear-gradient(90deg,#858585 0 4px,rgba(150,150,150,0.25) 4px 5px,#858585 5px 11px,rgba(150,150,150,0.25) 11px 12px,#858585 12px 15px,rgba(150,150,150,0.25) 15px 16px)"></div>
<div style="left:38px;top:544px;width:19px;height:1px;background:rgba(150,150,150,0.25)"></div>
<div style="left:38px;top:546px;width:99px;height:1px;background:repeating-linear-gradient(90deg,#858585 0 4px,rgba(150,150,150,0.25) 4px 5px,#858585 5px 11px,rgba(150,150,150,0.25) 11px 12px,#858585 12px 15px,rgba(150,150,150,0.25) 15px 16px)"></div>
<div style="left:38px;top:547px;width:99px;height:1px;background:rgba(150,150,150,0.25)"></div>
<div style="left:38px;top:549px;width:19px;height:1px;background:repeating-linear-gradient(90deg,#858585 0 4px,rgba(150,150,150,0.25) 4px 5px,#858585 5px 11px,rgba(150,150,150,0.25) 11px 12px,#858585 12px 15px,rgba(150,150,150,0.25) 15px 16px)"></div>
<div style="left:38px;top:550px;width:19px;height:1px;background:rgba(150,150,150,0.25)"></div>
<div style="left:38px;top:552px;width:99px;height:1px;background:repeating-linear-gradient(90deg,#858585 0 4px,rgba(150,150,150,0.25) 4px 5px,#858585 5px 11px,rgba(150,150,150,0.25) 11px 12px,#858585 12px 15px,rgba(150,150,150,0.25) 15px 16px)"></div>
<div style="left:38px;top:553px;width:99px;height:1px;background:rgba(150,150,150,0.25)"></div>
<div style="left:38px;top:555px;width:68px;height:1px;background:repeating-linear-gradient(90deg,#858585 0 4px,rgba(150,150,150,0.25) 4px 5px,#858585 5px 11px,rgba(150,150,150,0.25) 11px 12px,#858585 12px 15px,rgba(150,150,150,0.25) 15px 16px)"></div>
<div style="left:38px;top:556px;width:68px;height:1px;background:rgba(150,150,150,0.25)"></div>
<div style="left:35px;top:520px;width:1px;height:1px;background:#555"></div>
<div style="left:35px;top:523px;width:1px;height:1px;background:#555"></div>
<div style="left:35px;top:526px;width:1px;height:1px;background:#555"></div>
<div style="left:35px;top:534px;width:1px;height:1px;background:#555"></div>
<div style="left:35px;top:540px;width:1px;height:1px;background:#555"></div>
<div style="left:35px;top:546px;width:1px;height:1px;background:#555"></div>
<div style="left:35px;top:552px;width:1px;height:1px;background:#555"></div>
<div style="left:90px;top:514px;width:47px;height:1px;background:#1a1a1a"></div>
<div style="left:35px;top:518px;width:69px;height:1px;background:#1a1a1a"></div>

<!-- slide -->
<div style="left:241px;top:109px;width:756px;height:426px;background:#fff;border:1px solid #c8c8cc"></div>
<div class="ln j" style="left:266.5px;top:143.30px;width:681.5px">3. <b><span class="w">Стратифікаційний</span> <span class="w">підхід</span></b> <u><span class="w">досліджує</span> молодь як <span class="w">особливу</span> <span class="w">соціально</span>-</u></div>
<div class="ln j" style="left:266.5px;top:165.88px;width:681.5px"><u><span class="w">демографічну</span> <span class="w">групу</span>, <span class="w">обмежену</span> <span class="w">віковими</span> <span class="w">межами</span>, <span class="w">із</span> <span class="w">специфічними</span> <span class="w">соціальними</span></u></div>
<div class="ln j" style="left:266.5px;top:188.46px;width:681.5px"><u><span class="w">позиціями</span>, <span class="w">статусом</span> і <span class="w">ролями</span>, <span class="w">що</span> є <span class="w">об'єктом</span> і <span class="w">суб'єктом</span> <span class="w">процесу</span> <span class="w">спадкоємності</span> і</u></div>
<div class="ln j" style="left:266.5px;top:211.04px;width:681.5px"><u><span class="w">зміни</span> <span class="w">поколінь</span></u>. <span class="w">Тому</span>, <span class="w">вивчаючи</span> молодь <span class="w">відповідно</span> до <span class="w">такої</span> <span class="w">парадигми</span>, <span class="w">особлива</span></div>
<div class="ln j" style="left:266.5px;top:233.62px;width:681.5px"><span class="w">увага</span> <span class="w">зосереджується</span> на <span class="w">її</span> <span class="w">соціальних</span> <span class="w">функціях</span>. <b><span class="w">Основними</span> <span class="w">положеннями</span> при</b></div>
<div class="ln" style="left:266.5px;top:256.20px;width:681.5px"><b><span class="w">даному</span> <span class="w">підході</span> є:</b></div>
<div class="ln j" style="left:290.4px;top:278.78px;width:657.6px">молодь як «<span class="w">покоління</span> людей, <span class="w">що</span> <span class="w">проходять</span> <span class="w">стадію</span> <span class="w">соціалізації</span>, <span class="w">засвоюють</span>, а в</div>
<div class="ln j" style="left:290.4px;top:301.36px;width:657.6px"><span class="w">зрілішому</span> <span class="w">віці</span> – <span class="w">вже</span> <span class="w">засвоїли</span> <span class="w">освітні</span>, <span class="w">професійні</span>, <span class="w">культурні</span> та <span class="w">інші</span> <span class="w">соціальні</span></div>
<div class="ln j" style="left:290.4px;top:323.94px;width:657.6px"><span class="w">функції</span>; <span class="w">залежно</span> <span class="w">від</span> <span class="w">конкретних</span> <span class="w">історичних</span> умов <span class="w">вікові</span> <span class="w">критерії</span> <span class="w">молоді</span> <span class="w">можуть</span></div>
<div class="ln" style="left:290.4px;top:346.52px;width:657.6px"><span class="w">коливатися</span> <span class="w">від</span> 16 до 30 <span class="w">років</span>»;</div>
<div class="ln j" style="left:290.4px;top:369.10px;width:657.6px">молодь – <span class="w">це</span> один з <span class="w">прихованих</span> <span class="w">ресурсів</span>, <span class="w">які</span> є в кожному <span class="w">суспільстві</span> і <span class="w">від</span></div>
<div class="ln" style="left:290.4px;top:391.68px;width:657.6px"><span class="w">мобілізації</span> <span class="w">яких</span> <span class="w">залежить</span> <span class="w">його</span> <span class="w">життєздатність</span>;</div>
<div class="ln" style="left:290.4px;top:414.26px;width:657.6px"><span class="w">динамічні</span> <span class="w">суспільства</span> <span class="w">спираються</span> на <span class="w">зв'язок</span> з <span class="w">молоддю</span>;</div>
<div class="ln" style="left:290.4px;top:436.84px;width:657.6px">молодь <span class="w">виконує</span> <span class="w">функцію</span> <span class="w">оживляючого</span> <span class="w">посередника</span> <span class="w">соціального</span> <span class="w">життя</span>;</div>
<div class="ln j" style="left:290.4px;top:459.42px;width:657.6px">молодь не є <span class="w">ні</span> <span class="w">прогресивною</span>, <span class="w">ні</span> консервативною за <span class="w">своєю</span> природою, вона</div>
<div class="ln" style="left:290.4px;top:482.00px;width:657.6px"><span class="w">потенція</span>, готова до <span class="w">будь-якого</span> почину.</div>
<div class="ln" style="left:266.5px;top:278.78px">-</div>
<div class="ln" style="left:266.5px;top:369.10px">-</div>
<div class="ln" style="left:266.5px;top:414.26px">-</div>
<div class="ln" style="left:266.5px;top:436.84px">-</div>
<div class="ln" style="left:266.5px;top:459.42px">-</div>

<!-- status bar -->
<div id="status"></div>
<div class="t" style="left:9.7px;top:582.5px;font-size:10px;color:#333;transform:scaleX(0.82)">Слайд 7 з 34</div>
<div class="t" style="left:98.4px;top:582.5px;font-size:10px;color:#333;transform:scaleX(0.913)">українська</div>
<div class="t" style="left:735.5px;top:582px;font-size:10px;color:#333;transform:scaleX(0.945)">Примітки</div>
<div style="left:790.5px;top:578px;width:31px;height:17px;background:#c9c9c9"></div>
<div class="t" style="left:1029px;top:582.5px;font-size:10px;color:#444;transform:scaleX(0.9)">101%</div>
<svg style="position:absolute;left:0;top:0" width="1362" height="601">
  <g fill="none" stroke="#666" stroke-width="1">
    <path d="M79.5 581.5h-5v8h5v1.5 M79.5 581.5v9.5 M80 589.5h4.5v-2 M84.5 581.5h-3.5" stroke="#777"/><path d="M85 582.5l-4.5 5.5l-0.5 1.5l1.5-0.5l4.5-5.5z" stroke="#666" stroke-width="0.9"/>
    <rect x="800.5" y="580.5" width="10" height="9.5"/>
    <rect x="802.5" y="582.5" width="6" height="3.5"/>
    <path d="M802.5 588h6"/>
    <rect x="831.5" y="581.5" width="5" height="3.5"/><rect x="838.5" y="581.5" width="5" height="3.5"/>
    <rect x="831.5" y="587.5" width="5" height="3.5"/><rect x="838.5" y="587.5" width="5" height="3.5"/>
    <path d="M863.5 581.5h4.5l1 1l1-1h3.5v9h-3.5l-1 1l-1-1h-4.5z M869 582.5v8.5 M865 584h2.5 M865 586.5h2.5 M865 589h2.5 M870.5 584h2 M870.5 586.5h2 M870.5 589h2"/>
    <path d="M894.5 582.5h10 M895.5 582.5v5h8v-5 M899.5 587.5v3 M897 591.5h5"/>
    <path d="M920.5 586.5h6 M1012.5 586.5h7 M1016 583v7"/>
    <path d="M931 586.5h77" stroke="#aaa"/>
    <path d="M1061.5 584v-2.5h2.5 M1068 581.5h2.5v2.5 M1070.5 588v2.5h-2.5 M1064 590.5h-2.5v-2.5 M1062.5 582.5l2.5 2.5 M1069.5 582.5l-2.5 2.5 M1069.5 589.5l-2.5-2.5 M1062.5 589.5l2.5-2.5"/>
  </g>
  <rect x="968.5" y="582" width="4" height="9" fill="#777"/>
  <path d="M722 581h11v7h-7l-3 3v-3h-1z" fill="#555"/>
</svg>

<!-- video -->
<div style="left:1081px;top:288px;width:3px;height:38px;background:#9a9a9a"></div>
<div style="left:1088px;top:234px;width:269px;height:151px;overflow:hidden;background:#d8c6c4">
  <svg style="position:absolute;left:0;top:0" width="269" height="151">
    <defs>
      <filter id="bl" x="-5%" y="-5%" width="110%" height="110%"><feGaussianBlur stdDeviation="1.1"/></filter>
      <linearGradient id="wall" x1="0" y1="0" x2="1" y2="1"><stop offset="0" stop-color="#e0d0cf"/><stop offset="1" stop-color="#d5c3c1"/></linearGradient>
      <linearGradient id="orng" x1="0" y1="0" x2="1" y2="0"><stop offset="0" stop-color="#b45844"/><stop offset="0.3" stop-color="#c9644d"/><stop offset="0.55" stop-color="#bb5c47"/><stop offset="0.85" stop-color="#d0735c"/><stop offset="1" stop-color="#dc8f7c"/></linearGradient>
      <linearGradient id="pink" x1="0" y1="0" x2="1" y2="0"><stop offset="0" stop-color="#eab3ae"/><stop offset="0.35" stop-color="#c98c82"/><stop offset="1" stop-color="#a87a70"/></linearGradient>
      <radialGradient id="face" cx="0.5" cy="0.45" r="0.6"><stop offset="0" stop-color="#b0857a"/><stop offset="1" stop-color="#8f675f"/></radialGradient>
    </defs>
    <g filter="url(#bl)">
      <rect x="-5" y="-5" width="280" height="165" fill="url(#wall)"/>
      <rect x="-5" y="-5" width="280" height="19" fill="#e6dcda"/>
      <rect x="88" y="13" width="185" height="2" fill="#cfc0bd"/>
      <path d="M-5 -5 L38 -5 L28 160 L-5 160z" fill="url(#orng)"/>
      <path d="M38 -5 L75 -5 L70 160 L28 160z" fill="#fdfbfb"/>
      <path d="M75 -5 L80 -5 L75 160 L70 160z" fill="#efc2c5"/>
      <path d="M80 -5 L90 -5 L86 160 L75 160z" fill="#8e756f"/>
      <path d="M90 -5 L97 -5 L95 160 L86 160z" fill="#bcaca8"/>
      <rect x="165" y="58" width="28" height="47" fill="#6c5a4e"/>
      <rect x="167" y="60" width="24" height="43" fill="#dcd8d6"/><rect x="169" y="62" width="20" height="39" fill="#a9b8c8"/>
      <path d="M169 80 L178 68 L189 78 L189 101 L169 101z" fill="#76806e"/>
      <rect x="238" y="60" width="35" height="95" fill="#e7dfdd"/>
      <rect x="238" y="60" width="35" height="12" fill="#8a7a75"/>
      <rect x="244" y="76" width="28" height="80" fill="#efeded"/>
      <rect x="243" y="76" width="2" height="80" fill="#c9c2c0"/>
      <path d="M58 160 C66 132 88 116 113 110 Q138 124 165 108 C192 110 214 118 226 135 L236 160z" fill="#262628"/>
      <path d="M116 98 L162 98 L166 112 Q140 128 112 113z" fill="#9a776e"/>
      <path d="M147 128 L146 151" stroke="#a8948f" stroke-width="1.6"/>
      <ellipse cx="138" cy="79" rx="28.5" ry="31" fill="url(#face)"/>
      <path d="M101 88 C97 70 98 50 106 38 C112 28 125 21 142 22 C158 21 170 28 175 40 C178 48 176 56 178 62 C182 72 185 84 180 93 C175 91 170 88 167 82 C166 72 165 64 160 60 C154 57 151 55 146 50 C139 48 130 51 122 53 C116 55 113 59 112 66 C111 76 112 86 108 92 C105 92 102 90 101 88z" fill="#28232a"/>
      <path d="M110 75 h58" stroke="#c9bcb9" stroke-width="0.9" opacity="0.8"/><path d="M111 73 l4 3" stroke="#eee" stroke-width="1.5"/>
      <path d="M112 76 q12 7 24 0 M140 76 q13 7 26 0" stroke="#b8a4a0" stroke-width="0.8" fill="none"/>
      <path d="M131 102 q7 2 14 0" stroke="#6e4a45" stroke-width="1.6" fill="none"/>
    </g>
    <rect x="3" y="133" width="108" height="18" rx="3" fill="rgba(50,50,52,0.8)"/>
    <rect x="5" y="144" width="2" height="4" fill="#fff"/>
    <rect x="9" y="141" width="2" height="7" fill="#fff"/>
    <rect x="13" y="138.5" width="2" height="9.5" fill="#fff"/>
    <rect x="17" y="136.5" width="2" height="11.5" fill="#fff"/>
  </svg>
  <div class="t" style="left:23.3px;top:136.5px;font-size:12.9px;color:#fff">Юрик Наталія</div>
</div>

<!-- cursor -->
<svg style="position:absolute;left:1034px;top:457px" width="14" height="18">
  <path d="M1.5 1.5v12.5l3-3l2.5 5l2-1l-2.5-5h4z" fill="#fff" stroke="#333" stroke-width="1"/>
</svg>

<div class="t" style="left:1028px;top:582px;font-size:19.8px;color:rgba(190,190,195,0.5)">Активація Windows</div>
</body></html>
